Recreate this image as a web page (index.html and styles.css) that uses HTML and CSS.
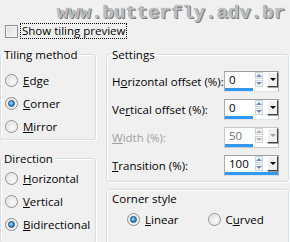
FILE: index.html
```html
<!DOCTYPE html>
<html>
<head>
<meta charset="utf-8">
<link rel="stylesheet" href="styles.css">
</head>
<body>
<div class="page">
  <div class="watermark">www.butterfly.adv.br</div>
  <div class="preview-row">
    <span class="checkbox"></span>
    <span class="focus">Show tiling preview</span>
  </div>
  <div class="columns">
    <div class="col col-left">
      <fieldset class="group tiling">
        <legend>Tiling method</legend>
        <div class="radio"><span class="rb"></span><span><u>E</u>dge</span></div>
        <div class="radio"><span class="rb on"></span><span><u>C</u>orner</span></div>
        <div class="radio"><span class="rb"></span><span><u>M</u>irror</span></div>
      </fieldset>
      <fieldset class="group direction">
        <legend>Direction</legend>
        <div class="radio"><span class="rb"></span><span><u>H</u>orizontal</span></div>
        <div class="radio"><span class="rb"></span><span><u>V</u>ertical</span></div>
        <div class="radio"><span class="rb on"></span><span><u>B</u>idirectional</span></div>
      </fieldset>
    </div>
    <div class="col col-right">
      <fieldset class="group settings">
        <legend>Settings</legend>
        <div class="row">
          <span class="lbl">H<u>o</u>rizontal offset (%):</span>
          <div class="spin">
            <div class="spin-main"><span class="val">0</span><span class="arrows"><span class="up"></span><span class="down"></span></span><span class="drop"></span></div>
            <div class="bar" style="width:28px"></div>
          </div>
        </div>
        <div class="row">
          <span class="lbl">Ve<u>r</u>tical offset (%):</span>
          <div class="spin">
            <div class="spin-main"><span class="val">0</span><span class="arrows"><span class="up"></span><span class="down"></span></span><span class="drop"></span></div>
            <div class="bar" style="width:28px"></div>
          </div>
        </div>
        <div class="row disabled">
          <span class="lbl"><u>W</u>idth (%):</span>
          <div class="spin">
            <div class="spin-main"><span class="val">50</span><span class="arrows"><span class="up"></span><span class="down"></span></span><span class="drop"></span></div>
            <div class="bar" style="width:28px"></div>
          </div>
        </div>
        <div class="row">
          <span class="lbl"><u>T</u>ransition (%):</span>
          <div class="spin">
            <div class="spin-main"><span class="val">100</span><span class="arrows"><span class="up"></span><span class="down"></span></span><span class="drop"></span></div>
            <div class="bar" style="width:53px"></div>
          </div>
        </div>
      </fieldset>
      <div class="group corner">
        <div class="corner-title">Corner style</div>
        <div class="corner-opts">
          <div class="radio"><span class="rb on"></span><span><u>L</u>inear</span></div>
          <div class="radio"><span class="rb"></span><span>C<u>u</u>rved</span></div>
        </div>
      </div>
    </div>
  </div>
</div>
</body>
</html>
```

FILE: styles.css
```css
html, body {
  margin: 0;
  padding: 0;
  background: #f0f0f0;
}
body {
  font-family: "Open Sans", "Noto Sans", sans-serif;
  font-size: 11.5px;
  color: #000;
  width: 290px;
  height: 242px;
  overflow: hidden;
}
u { text-decoration: underline; text-underline-offset: 1px; }
.page {
  position: relative;
  width: 290px;
  height: 242px;
}
.watermark {
  position: absolute;
  left: 57px;
  top: 2px;
  font-family: "Liberation Mono", monospace;
  font-weight: bold;
  font-size: 19px;
  color: #bdbdbd;
  text-shadow: 1px 1px 0 #7a7a7a, 0 0 1px #8a8a8a;
}
.preview-row {
  display: flex;
  align-items: center;
  height: 16px;
  padding: 23px 0 0 5px;
}
.checkbox {
  width: 11px;
  height: 11px;
  border: 1px solid #8e8f8f;
  background: linear-gradient(135deg, #dcdcdc, #f8f8f8);
  box-shadow: inset 0 0 0 1px #f4f4f4;
  margin-right: 3px;
}
.focus {
  outline: 1px dotted #000;
  padding: 0 1px;
  line-height: 14px;
}
.columns {
  display: flex;
  padding-top: 8px;
}
.col-left { width: 96px; }
.col-right { width: 183px; margin-left: 10px; }
.group {
  margin: 0;
  padding: 0;
  border: 1px solid #d5dfe5;
  border-radius: 3px;
  box-shadow: inset 1px 1px 0 #fff, 1px 1px 0 #fff;
  box-sizing: border-box;
}
legend {
  padding: 0 2px;
  margin-left: -3px;
  line-height: 15px;
}
.tiling {
  height: 93px;
  padding: 7px 0 0 4px;
}
.direction {
  height: 92px;
  margin-top: 11px;
  padding: 1px 0 0 4px;
}
.radio {
  display: flex;
  align-items: center;
  height: 23px;
}
.rb {
  width: 11px;
  height: 11px;
  border: 1px solid #8e8f8f;
  border-radius: 50%;
  background: radial-gradient(circle at 60% 60%, #fafafa 0, #e2e2e2 70%, #d8d8d8 100%);
  margin-right: 5px;
  position: relative;
  box-shadow: inset 0 0 0 1px #f2f2f2;
}
.rb.on::after {
  content: "";
  position: absolute;
  left: 2px;
  top: 2px;
  width: 5px;
  height: 5px;
  border-radius: 50%;
  border: 1px solid #1a4f7a;
  background: radial-gradient(circle at 40% 40%, #a8e0ff 0, #2f90d8 55%, #1a5f96 100%);
}
.settings {
  height: 135px;
  padding: 5px 0 0 5px;
}
.settings legend { margin-left: -2px; }
.row {
  display: flex;
  align-items: center;
  justify-content: space-between;
  height: 28px;
  padding-right: 9px;
}
.spin {
  width: 55px;
  height: 21px;
  border: 1px solid #abadb3;
  border-top-color: #a0a0a0;
  border-bottom-color: #dde3ea;
  background: #fff;
  box-sizing: border-box;
  display: flex;
  flex-direction: column;
}
.spin-main {
  flex: 1;
  display: flex;
  align-items: center;
}
.val {
  width: 30px;
  padding-left: 4px;
  box-sizing: border-box;
}
.arrows {
  display: flex;
  flex-direction: column;
  gap: 1px;
  width: 9px;
}
.up, .down {
  width: 8px;
  height: 7px;
  border: 1px solid #c9d3dc;
  box-sizing: border-box;
  background: #f4f6f8;
  display: flex;
  align-items: center;
  justify-content: center;
}
.up::after, .down::after {
  content: "";
  border-left: 3px solid transparent;
  border-right: 3px solid transparent;
}
.up::after { border-bottom: 3px solid #6e8bb0; }
.down::after { border-top: 3px solid #6e8bb0; }
.drop {
  width: 11px;
  height: 15px;
  margin-left: 3px;
  box-sizing: border-box;
  border: 1px solid #fff;
  border-right-color: #404040;
  border-bottom-color: #404040;
  background: #f0f0f0;
  display: flex;
  align-items: center;
  justify-content: center;
  box-shadow: 1px 1px 0 #a0a0a0;
}
.drop::after {
  content: "";
  border-left: 3px solid transparent;
  border-right: 3px solid transparent;
  border-top: 3px solid #000;
}
.bar {
  height: 3px;
  background: #3399ee;
}
.disabled .lbl { color: #a0a0a0; }
.disabled .val { color: #6d6d6d; }
.disabled .spin { border-color: #c8c8c8; }
.disabled .up::after { border-bottom-color: #b0b0b0; }
.disabled .down::after { border-top-color: #b0b0b0; }
.disabled .drop::after { border-top-color: #a0a0a0; }
.corner {
  margin-top: 7px;
  height: 60px;
  padding: 1px 0 0 5px;
}
.corner-title { line-height: 15px; }
.corner-opts {
  display: flex;
  padding: 2px 0 0 15px;
}
.corner-opts .radio { width: 81px; }
```
